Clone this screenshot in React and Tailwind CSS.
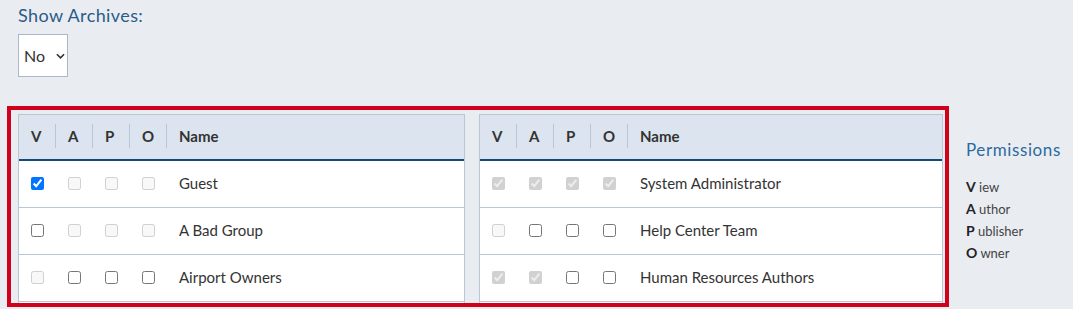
import React from "react";

/* ---------------------------------------------------
    DATA
----------------------------------------------------*/
// each flag: [checked, disabled]
const leftRows = [
  { name: "Guest", v: [true, false], a: [false, true], p: [false, true], o: [false, true] },
  { name: "A Bad Group", v: [false, false], a: [false, true], p: [false, true], o: [false, true] },
  { name: "Airport Owners", v: [false, true], a: [false, false], p: [false, false], o: [false, false] },
  { name: "", v: [false, false], a: [false, true], p: [false, true], o: [false, true] },
];

const rightRows = [
  { name: "System Administrator", v: [true, true], a: [true, true], p: [true, true], o: [true, true] },
  { name: "Help Center Team", v: [false, true], a: [false, false], p: [false, false], o: [false, false] },
  { name: "Human Resources Authors", v: [true, true], a: [true, true], p: [false, false], o: [false, false] },
  { name: "", v: [false, false], a: [false, true], p: [false, true], o: [false, true] },
];

const legend = [
  ["V", "iew"],
  ["A", "uthor"],
  ["P", "ublisher"],
  ["O", "wner"],
];

/* ---------------------------------------------------
    TABLE
----------------------------------------------------*/
const HeadCell = ({ label, last }) => (
  <div className={`h-full flex items-center ${last ? "flex-1" : "w-[37px]"}`}>
    <div
      className={`h-[24px] w-full flex items-center pl-3 ${
        last ? "" : "border-r border-[#b9c6d4]"
      }`}
    >
      {label}
    </div>
  </div>
);

const Check = ({ flag }) => (
  <div className="w-[37px] h-full flex items-center pl-3">
    <input
      type="checkbox"
      checked={flag[0]}
      disabled={flag[1]}
      readOnly
      className="w-[13px] h-[13px] m-0"
    />
  </div>
);

const PermTable = ({ rows, width }) => (
  <div
    className={`${width} shrink-0 bg-white border-x border-t border-[#b9c6d4]`}
  >
    <div className="h-[46px] flex items-center pb-[2px] bg-[#dbe4ef] border-b-2 border-[#0f4c7c] text-[15px] font-bold text-[#333]">
      <HeadCell label="V" />
      <HeadCell label="A" />
      <HeadCell label="P" />
      <HeadCell label="O" />
      <HeadCell label="Name" last />
    </div>
    {rows.map((r, i) => (
      <div
        key={i}
        className="h-[47px] flex items-center pb-[2px] border-b border-[#b9c6d4] text-[15px] text-[#333]"
      >
        <Check flag={r.v} />
        <Check flag={r.a} />
        <Check flag={r.p} />
        <Check flag={r.o} />
        <div className="flex-1 pl-3">{r.name}</div>
      </div>
    ))}
  </div>
);

/* ---------------------------------------------------
    PAGE
----------------------------------------------------*/
export default function App() {
  return (
    <div className="w-[1073px] h-[309px] overflow-hidden bg-[#e9edf2] font-['Lato',sans-serif]">
      {/* ARCHIVES */}
      <div className="pl-[18px] pt-[2px]">
        <p className="text-[18px] leading-[27px] tracking-[0.4px] text-[#2b5b87]">
          Show Archives:
        </p>
        <div className="relative mt-[5px] w-[50px] h-[43px]">
          <select
            defaultValue="No"
            className="appearance-none w-full h-full bg-white border border-[#a9b8c9] pl-[5px] text-[16px] text-[#333] outline-none"
          >
            <option>No</option>
            <option>Yes</option>
          </select>
          <svg
            viewBox="0 0 10 6"
            className="absolute left-[38px] top-[19px] w-[9px] h-[6px] pointer-events-none"
          >
            <path d="M1 1l4 4 4-4" fill="none" stroke="#333" strokeWidth="1.8" />
          </svg>
        </div>
      </div>

      {/* PERMISSIONS */}
      <div className="flex mt-[29px]">
        <div className="ml-[7px] w-[942px] h-[201px] shrink-0 border-4 border-[#d0021b] overflow-hidden">
          <div className="flex gap-[14px] pl-[7px] pt-[4px] pr-[2px]">
            <PermTable rows={leftRows} width="w-[447px]" />
            <PermTable rows={rightRows} width="w-[464px]" />
          </div>
        </div>

        <div className="ml-[17px] mt-[31px]">
          <p className="text-[17px] leading-[25px] tracking-[0.6px] text-[#2d6a9f]">
            Permissions
          </p>
          <div className="mt-[14px] text-[13px] leading-[22px] text-[#444]">
            {legend.map(([k, rest]) => (
              <div key={k}>
                <span className="font-bold text-[#222] text-[14px]">{k}</span> {rest}
              </div>
            ))}
          </div>
        </div>
      </div>
    </div>
  );
}
